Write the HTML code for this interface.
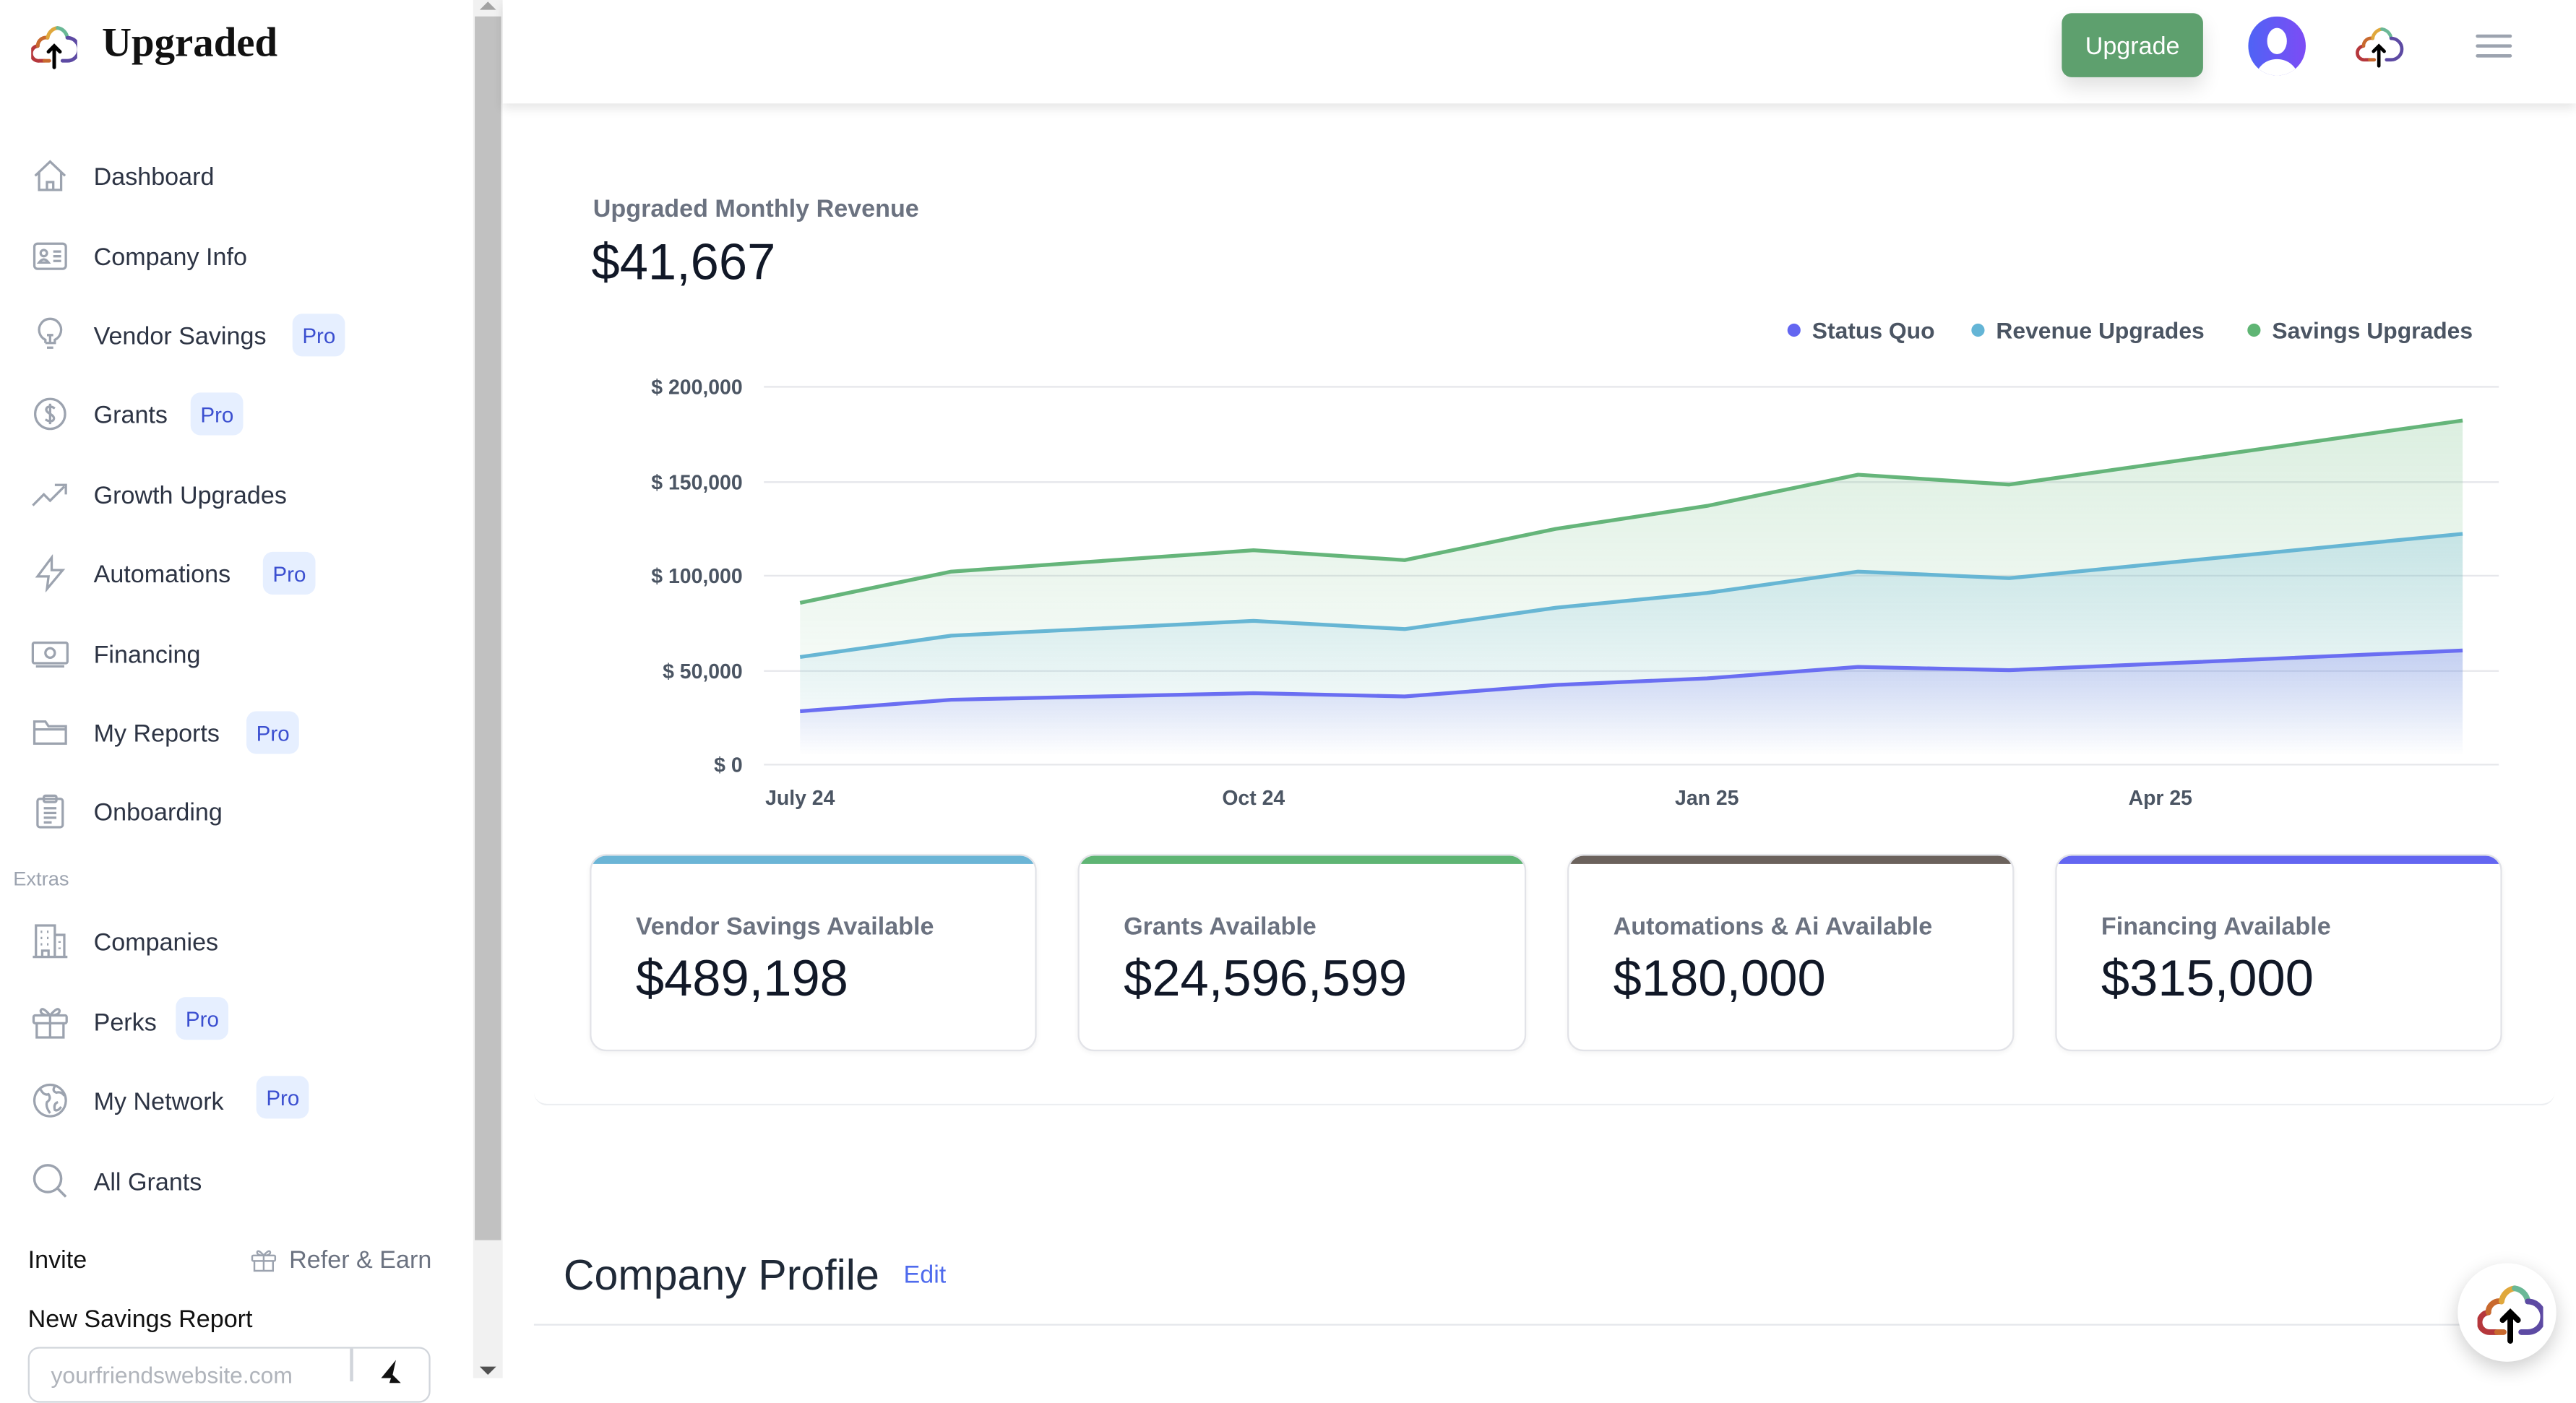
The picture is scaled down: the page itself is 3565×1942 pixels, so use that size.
<!DOCTYPE html>
<html><head><meta charset="utf-8"><style>
*{margin:0;padding:0;box-sizing:border-box}
html,body{width:3565px;height:1907px;overflow:hidden;background:#fff}
#w{position:absolute;left:0;top:0;width:1568px;height:839px;transform:scale(2.27360);transform-origin:0 0;font-family:"Liberation Sans",sans-serif;color:#374151}
.a{position:absolute;white-space:nowrap}
.nav{position:absolute;left:57px;font-size:15px;color:#2d3444;transform:translateY(-44%)}
.ic{position:absolute;left:19px;width:23px;height:23px;transform:translateY(-50%)}
.pro{position:absolute;font-size:13px;color:#3b4fd0;background:#e6efff;border-radius:6px;padding:0 6px;height:26px;line-height:27px;transform:translateY(-50%)}
.card{position:absolute;top:520px;width:272px;height:120px;border:1px solid #e2e3e8;border-radius:10px;box-shadow:0 1px 3px rgba(0,0,0,.05);overflow:hidden;background:#fff}
.card .bar{position:absolute;left:0;right:0;top:0;height:5px}
.card .l{position:absolute;left:27px;top:35px;font-size:15px;font-weight:bold;color:#6b7280}
.card .v{position:absolute;left:27px;top:57px;font-size:31px;color:#111827}
</style></head><body><div id="w">
<svg class="a" style="left:19px;top:13px" width="28" height="30" viewBox="0 0 28 30" fill="none" stroke-width="2.2" stroke-linecap="round">
<path d="M8 24 H5 A4.5 4.5 0 0 1 4 15" stroke="#b5373c"/><path d="M4 15 A5 5 0 0 1 10 10" stroke="#c8692e"/><path d="M10 10 A7 7 0 0 1 16 4" stroke="#e0a83c"/><path d="M16 4 A7 7 0 0 1 22 10" stroke="#6ab896"/><path d="M22 10 A5 5 0 0 1 22 24 H19" stroke="#5d4aa3"/><path d="M8 24 H11" stroke="#c8692e"/>
<path d="M14 28 V15 M10.5 18.5 L14 15 L17.5 18.5" stroke="#000"/></svg>
<div class="a" style="left:62px;top:13px;font-family:'Liberation Serif',serif;font-weight:bold;font-size:25px;color:#111">Upgraded</div>

<svg class="ic" style="top:107px" viewBox="0 0 24 24" fill="none" stroke="#9ca3af" stroke-width="1.5"><path d="M2.5 12 L12 3 L21.5 12 M5 10 V21 H19 V10 M10 21 V16 H14 V21"/></svg>
<div class="nav" style="top:107px">Dashboard</div>
<svg class="ic" style="top:156px" viewBox="0 0 24 24" fill="none" stroke="#9ca3af" stroke-width="1.5"><rect x="2" y="4" width="20" height="16" rx="2"/><circle cx="8" cy="10" r="2"/><path d="M5 16 Q8 12 11 16 Z M14 9 H19 M14 12 H19 M14 15 H19"/></svg>
<div class="nav" style="top:156px">Company Info</div>
<svg class="ic" style="top:204px" viewBox="0 0 24 24" fill="none" stroke="#9ca3af" stroke-width="1.5"><path d="M9 17 V15 A7 7 0 1 1 15 15 V17 H9 M10 20 H14 M12 17 V12 M10 12 H14"/></svg>
<div class="nav" style="top:204px">Vendor Savings</div><div class="pro" style="left:178px;top:204px">Pro</div>
<svg class="ic" style="top:252px" viewBox="0 0 24 24" fill="none" stroke="#9ca3af" stroke-width="1.5"><circle cx="12" cy="12" r="9.5"/><path d="M15 8.5 Q12 6.5 10 8 Q8.5 10 12 12 Q15.5 14 14 16 Q12 17.5 9 15.5 M12 5.5 V18.5"/></svg>
<div class="nav" style="top:252px">Grants</div><div class="pro" style="left:116px;top:252px">Pro</div>
<svg class="ic" style="top:301px" viewBox="0 0 24 24" fill="none" stroke="#9ca3af" stroke-width="1.5"><path d="M1 19 L8 12 L12 16 L21 7 M15 6 H22 V12"/></svg>
<div class="nav" style="top:301px">Growth Upgrades</div>
<svg class="ic" style="top:349px" viewBox="0 0 24 24" fill="none" stroke="#9ca3af" stroke-width="1.5"><path d="M13 2 L4 14 H11 L10 22 L20 10 H13 Z"/></svg>
<div class="nav" style="top:349px">Automations</div><div class="pro" style="left:160px;top:349px">Pro</div>
<svg class="ic" style="top:398px" viewBox="0 0 24 24" fill="none" stroke="#9ca3af" stroke-width="1.5"><rect x="1" y="5" width="22" height="13" rx="1"/><circle cx="12" cy="11.5" r="3"/><path d="M3 20 H21"/></svg>
<div class="nav" style="top:398px">Financing</div>
<svg class="ic" style="top:446px" viewBox="0 0 24 24" fill="none" stroke="#9ca3af" stroke-width="1.5"><path d="M2 6 V19 H22 V8 H11 L9 5 H2 Z M2 10 H22"/></svg>
<div class="nav" style="top:446px">My Reports</div><div class="pro" style="left:150px;top:446px">Pro</div>
<svg class="ic" style="top:494px" viewBox="0 0 24 24" fill="none" stroke="#9ca3af" stroke-width="1.5"><rect x="4" y="4" width="16" height="18" rx="1.5"/><rect x="8" y="2" width="8" height="4" rx="1"/><path d="M8 10 H16 M8 13 H16 M8 16 H16 M8 19 H13"/></svg>
<div class="nav" style="top:494px">Onboarding</div>
<div class="a" style="left:8px;top:528px;font-size:12px;color:#9ca3af">Extras</div>
<svg class="ic" style="top:573px" viewBox="0 0 24 24" fill="none" stroke="#9ca3af" stroke-width="1.5"><path d="M1 22 H23 M3 22 V2 H15 V22 M15 8 H21 V22 M7 22 V18 H11 V22 M6 6 H7 M10 6 H11 M6 10 H7 M10 10 H11 M6 14 H7 M10 14 H11 M18 12 V13 M18 16 V17"/></svg>
<div class="nav" style="top:573px">Companies</div>
<svg class="ic" style="top:622px" viewBox="0 0 24 24" fill="none" stroke="#9ca3af" stroke-width="1.5"><rect x="1.5" y="8" width="21" height="5" rx="1"/><path d="M3.5 13 V22 H20.5 V13 M12 8 V22 M12 8 Q7 2 6 5 Q6 8 12 8 Q17 2 18 5 Q18 8 12 8"/></svg>
<div class="nav" style="top:622px">Perks</div><div class="pro" style="left:107px;top:620px">Pro</div>
<svg class="ic" style="top:670px" viewBox="0 0 24 24" fill="none" stroke="#9ca3af" stroke-width="1.5"><circle cx="12" cy="12" r="10"/><path d="M6 5 Q8 9 11 8 Q13 11 10 13 Q9 16 12 20 M15 3 Q13 6 16 7 Q19 6 21 9 M17 13 Q14 14 15 18 Q17 19 19 16"/></svg>
<div class="nav" style="top:670px">My Network</div><div class="pro" style="left:156px;top:668px">Pro</div>
<svg class="ic" style="top:719px" viewBox="0 0 24 24" fill="none" stroke="#9ca3af" stroke-width="1.6"><circle cx="10.5" cy="10.5" r="8.5"/><path d="M16.5 16.5 L22 22"/></svg>
<div class="nav" style="top:719px">All Grants</div>
<div class="a" style="left:17px;top:759px;font-size:15px;color:#111">Invite</div>
<svg class="a" style="left:152px;top:759px" width="17" height="16" viewBox="0 0 24 24" fill="none" stroke="#9ca3af" stroke-width="1.6"><rect x="1.5" y="8" width="21" height="5" rx="1"/><path d="M3.5 13 V22 H20.5 V13 M12 8 V22 M12 8 Q7 2 6 5 Q6 8 12 8 Q17 2 18 5 Q18 8 12 8"/></svg>
<div class="a" style="left:176px;top:759px;font-size:15px;color:#6b7280">Refer &amp; Earn</div>
<div class="a" style="left:17px;top:795px;font-size:15px;color:#111">New Savings Report</div>
<div class="a" style="left:17px;top:820px;width:245px;height:34px;border:1.5px solid #d1d5db;border-radius:7px"></div>
<div class="a" style="left:213px;top:821px;width:1.5px;height:20px;background:#d1d5db"></div>
<div class="a" style="left:31px;top:829px;font-size:14px;color:#b0b4bb">yourfriendswebsite.com</div>
<svg class="a" style="left:229px;top:828px" width="18" height="14" viewBox="0 0 18 14"><path d="M12 0 L3 11 H9 L8 14 H15 L10 9 Z" fill="#111"/></svg>
<div class="a" style="left:288px;top:0;width:18px;height:839px;background:#f1f1f1"></div>
<div class="a" style="left:289px;top:10px;width:16px;height:745px;background:#c1c1c1"></div>
<div class="a" style="left:292px;top:1px;width:0;height:0;border-left:5px solid transparent;border-right:5px solid transparent;border-bottom:5px solid #a3a3a3"></div>
<div class="a" style="left:292px;top:832px;width:0;height:0;border-left:5px solid transparent;border-right:5px solid transparent;border-top:5px solid #505050"></div>
<div class="a" style="left:306px;top:0;width:1262px;height:63px;background:#fff;box-shadow:0 3px 6px rgba(0,0,0,.1)"></div>
<div class="a" style="left:1255px;top:8px;width:86px;height:39px;background:#5ea06e;border-radius:6px;color:#fff;font-size:15px;line-height:41px;text-align:center;box-shadow:0 6px 12px rgba(0,0,0,.12)">Upgrade</div>
<svg class="a" style="left:1368px;top:10px" width="36" height="36" viewBox="0 0 36 36"><defs><linearGradient id="ag" x1="0" y1="0" x2="1" y2="0"><stop offset="0" stop-color="#4f63f5"/><stop offset="1" stop-color="#7d4cf5"/></linearGradient><clipPath id="cc"><ellipse cx="18" cy="18" rx="17.5" ry="18"/></clipPath></defs><ellipse cx="18" cy="18" rx="17.5" ry="18" fill="url(#ag)"/><ellipse cx="18" cy="15" rx="6" ry="8" fill="#fff"/><g clip-path="url(#cc)"><ellipse cx="18" cy="38" rx="13" ry="12" fill="#fff"/></g></svg>
<svg class="a" style="left:1432px;top:14px" width="32" height="28" viewBox="0 0 28 30" fill="none" stroke-width="2.2" stroke-linecap="round">
<path d="M8 24 H5 A4.5 4.5 0 0 1 4 15" stroke="#b5373c"/><path d="M4 15 A5 5 0 0 1 10 10" stroke="#c8692e"/><path d="M10 10 A7 7 0 0 1 16 4" stroke="#e0a83c"/><path d="M16 4 A7 7 0 0 1 22 10" stroke="#6ab896"/><path d="M22 10 A5 5 0 0 1 22 24 H19" stroke="#5d4aa3"/><path d="M8 24 H11" stroke="#c8692e"/><path d="M14 28 V15 M10.5 18.5 L14 15 L17.5 18.5" stroke="#000"/></svg>
<svg class="a" style="left:1507px;top:20px" width="22" height="16" viewBox="0 0 22 16" stroke="#9ca3af" stroke-width="2" stroke-linecap="round"><path d="M1 2 H21 M1 8 H21 M1 14 H21"/></svg>
<div class="a" style="left:325px;top:63px;width:1230px;height:610px;border-bottom:1px solid #eceef1;border-radius:0 0 8px 8px"></div>
<div class="a" style="left:361px;top:119px;font-size:15px;font-weight:bold;color:#6b7280">Upgraded Monthly Revenue</div>
<div class="a" style="left:360px;top:142px;font-size:31px;color:#111827">$41,667</div>
<svg class="a" style="left:0;top:0" width="1568" height="520" viewBox="0 0 1568 520" font-family="Liberation Sans, sans-serif">
<defs>
<linearGradient id="gg" x1="0" y1="0" x2="0" y2="1"><stop offset="0" stop-color="#5fb574" stop-opacity=".22"/><stop offset="1" stop-color="#5fb574" stop-opacity="0"/></linearGradient>
<linearGradient id="gb" x1="0" y1="0" x2="0" y2="1"><stop offset="0" stop-color="#64b5d6" stop-opacity=".25"/><stop offset="1" stop-color="#64b5d6" stop-opacity="0"/></linearGradient>
<linearGradient id="gp" x1="0" y1="0" x2="0" y2="1"><stop offset="0" stop-color="#6366f1" stop-opacity=".25"/><stop offset="1" stop-color="#6366f1" stop-opacity="0"/></linearGradient>
</defs>
<g stroke="#e6e7eb" stroke-width="1"><path d="M465 235.5H1521M465 293.5H1521M465 350.5H1521M465 408.5H1521M465 465.5H1521"/></g>
<g font-size="12.5" font-weight="bold" fill="#4b5563" text-anchor="end"><text x="452" y="240">$ 200,000</text><text x="452" y="298">$ 150,000</text><text x="452" y="355">$ 100,000</text><text x="452" y="413">$ 50,000</text><text x="452" y="470">$ 0</text></g>
<g font-size="12.5" font-weight="bold" fill="#4b5563" text-anchor="middle"><text x="487" y="490">July 24</text><text x="763" y="490">Oct 24</text><text x="1039" y="490">Jan 25</text><text x="1315" y="490">Apr 25</text></g>
<path d="M487 367 L579 348 L763 335 L855 341 L947 322 L1039 308 L1131 289 L1223 295 L1499 256 V460 H487Z" fill="url(#gg)"/>
<path d="M487 400 L579 387 L763 378 L855 383 L947 370 L1039 361 L1131 348 L1223 352 L1499 325 V460 H487Z" fill="url(#gb)"/>
<path d="M487 433 L579 426 L763 422 L855 424 L947 417 L1039 413 L1131 406 L1223 408 L1499 396 V460 H487Z" fill="url(#gp)"/>
<g fill="none" stroke-width="2.3" stroke-linejoin="round">
<path d="M487 367 L579 348 L763 335 L855 341 L947 322 L1039 308 L1131 289 L1223 295 L1499 256" stroke="#65b57a"/>
<path d="M487 400 L579 387 L763 378 L855 383 L947 370 L1039 361 L1131 348 L1223 352 L1499 325" stroke="#67b6d4"/>
<path d="M487 433 L579 426 L763 422 L855 424 L947 417 L1039 413 L1131 406 L1223 408 L1499 396" stroke="#6a6ef2"/></g>
<circle cx="1092" cy="201" r="4" fill="#6366f1"/><circle cx="1204" cy="201" r="4" fill="#64b5d6"/><circle cx="1372" cy="201" r="4" fill="#5fb574"/>
<g font-size="14" font-weight="bold" fill="#4b5563"><text x="1103" y="206">Status Quo</text><text x="1215" y="206">Revenue Upgrades</text><text x="1383" y="206">Savings Upgrades</text></g>
</svg>
<div class="card" style="left:359px"><div class="bar" style="background:#6bb5d6"></div><div class="l">Vendor Savings Available</div><div class="v">$489,198</div></div>
<div class="card" style="left:656px;width:273px"><div class="bar" style="background:#5fb574"></div><div class="l">Grants Available</div><div class="v">$24,596,599</div></div>
<div class="card" style="left:954px"><div class="bar" style="background:#6b625c"></div><div class="l">Automations &amp; Ai Available</div><div class="v">$180,000</div></div>
<div class="card" style="left:1251px"><div class="bar" style="background:#6366f1"></div><div class="l">Financing Available</div><div class="v">$315,000</div></div>
<div class="a" style="left:343px;top:761px;font-size:26px;color:#1f2937">Company Profile</div>
<div class="a" style="left:550px;top:768px;font-size:15px;color:#4f6bed">Edit</div>
<div class="a" style="left:325px;top:806px;width:1230px;height:1px;background:#e5e7eb"></div>
<div class="a" style="left:1496px;top:769px;width:60px;height:60px;border-radius:50%;background:#fff;box-shadow:0 4px 12px rgba(0,0,0,.2)"></div>
<svg class="a" style="left:1508px;top:779px" width="40" height="40" viewBox="0 0 28 30" fill="none" stroke-width="2.6" stroke-linecap="round">
<path d="M8 24 H5 A4.5 4.5 0 0 1 4 15" stroke="#b5373c"/><path d="M4 15 A5 5 0 0 1 10 10" stroke="#c8692e"/><path d="M10 10 A7 7 0 0 1 16 4" stroke="#e0a83c"/><path d="M16 4 A7 7 0 0 1 22 10" stroke="#6ab896"/><path d="M22 10 A5 5 0 0 1 22 24 H19" stroke="#5d4aa3"/><path d="M8 24 H11" stroke="#c8692e"/><path d="M14 28 V15 M10.5 18.5 L14 15 L17.5 18.5" stroke="#000"/></svg>
</div></body></html>
